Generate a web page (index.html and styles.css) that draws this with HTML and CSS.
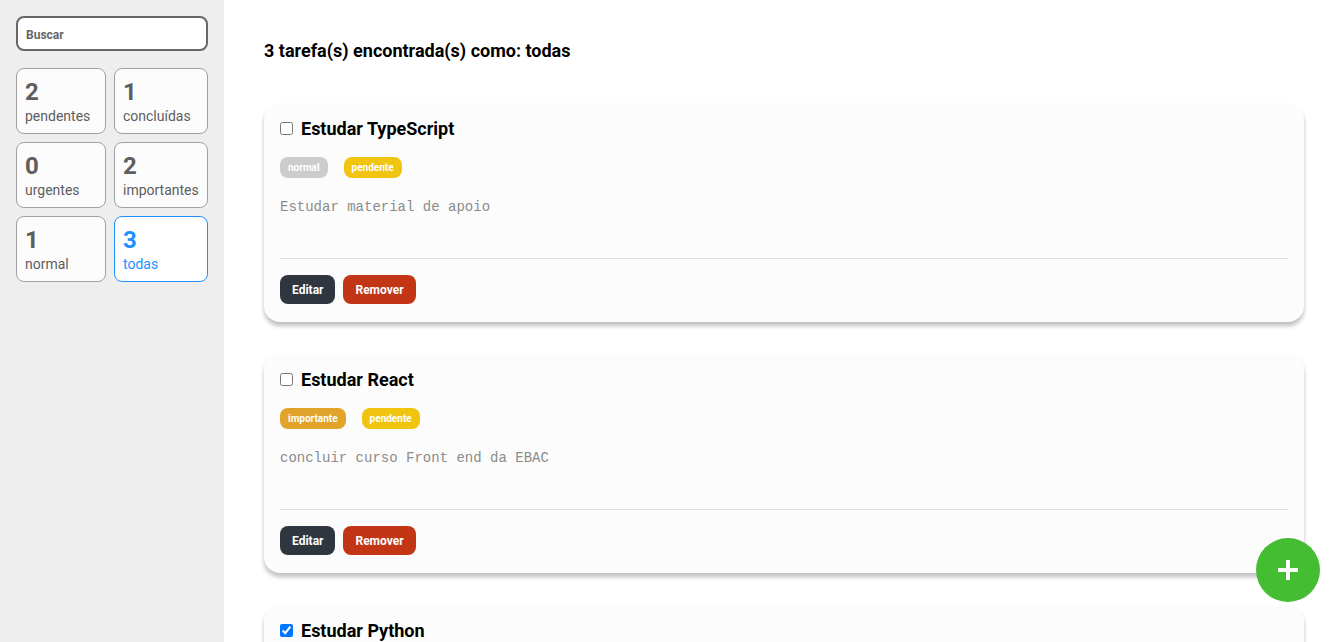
FILE: index.html
```html
<!DOCTYPE html>
<html lang="pt-BR">
<head>
<meta charset="utf-8">
<title>Tarefas</title>
<link rel="stylesheet" href="styles.css">
</head>
<body>
<div class="layout">
  <aside class="sidebar">
    <input class="search" type="text" placeholder="Buscar">
    <div class="filters">
      <div class="filter"><span class="count">2</span><span class="label">pendentes</span></div>
      <div class="filter"><span class="count">1</span><span class="label">concluídas</span></div>
      <div class="filter"><span class="count">0</span><span class="label">urgentes</span></div>
      <div class="filter"><span class="count">2</span><span class="label">importantes</span></div>
      <div class="filter"><span class="count">1</span><span class="label">normal</span></div>
      <div class="filter active"><span class="count">3</span><span class="label">todas</span></div>
    </div>
  </aside>
  <main class="main">
    <h2 class="heading">3 tarefa(s) encontrada(s) como: todas</h2>
    <ul class="list">
      <li class="task">
        <label class="task-title"><input type="checkbox"> <span>Estudar TypeScript</span></label>
        <div class="tags"><span class="tag tag-normal">normal</span><span class="tag tag-pendente">pendente</span></div>
        <div class="desc">Estudar material de apoio</div>
        <div class="actions"><button class="btn btn-edit">Editar</button><button class="btn btn-remove">Remover</button></div>
      </li>
      <li class="task">
        <label class="task-title"><input type="checkbox"> <span>Estudar React</span></label>
        <div class="tags"><span class="tag tag-importante">importante</span><span class="tag tag-pendente">pendente</span></div>
        <div class="desc">concluir curso Front end da EBAC</div>
        <div class="actions"><button class="btn btn-edit">Editar</button><button class="btn btn-remove">Remover</button></div>
      </li>
      <li class="task">
        <label class="task-title"><input type="checkbox" checked> <span>Estudar Python</span></label>
        <div class="tags"><span class="tag tag-normal">normal</span><span class="tag tag-done">concluída</span></div>
        <div class="desc">Estudar Python</div>
        <div class="actions"><button class="btn btn-edit">Editar</button><button class="btn btn-remove">Remover</button></div>
      </li>
    </ul>
    <button class="fab" aria-label="Adicionar">
      <svg width="22" height="22" viewBox="0 0 22 22"><path d="M11 1v20M1 11h20" stroke="#fff" stroke-width="4" fill="none"/></svg>
    </button>
  </main>
</div>
</body>
</html>
```
FILE: styles.css
```css
* { box-sizing: border-box; }
html, body { margin: 0; padding: 0; height: 100%; }
body { font-family: Roboto, "Noto Sans", sans-serif; background: #fff; overflow: hidden; }
.layout { display: grid; grid-template-columns: 224px 1fr; height: 100vh; }
.sidebar { background: #eee; padding: 16px; }
.search {
  width: 100%; height: 35px; border: 2px solid #666; border-radius: 8px;
  padding: 9px 8px 7px; font-family: Roboto, sans-serif; font-weight: 700; font-size: 12px;
  background: #fff; color: #666; display: block;
}
.search::placeholder { color: #666; }
.filters { display: grid; grid-template-columns: 90fr 94fr; gap: 8px; margin-top: 17px; }
.filter {
  height: 66px; border: 1px solid #a1a1a1; border-radius: 8px; background: #fcfcfc;
  padding: 9px 8px 8px; display: flex; flex-direction: column; color: #5e5e5e;
}
.count { font-size: 24px; font-weight: 700; line-height: 28px; }
.label { font-size: 14px; line-height: 16px; margin-top: 2px; }
.filter.active { border-color: #1e90ff; color: #1e90ff; background: #fff; }
.main { padding: 40px 40px 0 40px; overflow: hidden; }
.heading { margin: 0 0 42px; font-size: 18px; font-weight: 700; line-height: 21px; color: #000; }
.list { list-style: none; margin: 0; padding: 0; display: flex; flex-direction: column; gap: 32px; }
.task {
  background: #fcfcfc; border-radius: 16px; padding: 15px 16px 18px;
  box-shadow: 0 4px 4px rgba(0,0,0,0.25);
}
.task-title { display: flex; align-items: center; gap: 6px; font-size: 18px; font-weight: 700; line-height: 21px; color: #000; }
.task-title input { margin: 0 2px 0 0; width: 13px; height: 13px; }
.tags { display: flex; gap: 16px; margin-top: 18px; }
.tag { font-size: 10px; font-weight: 700; color: #fff; padding: 0 8px; height: 21px; line-height: 21px; border-radius: 8px; }
.tag-normal { background: #ccc; }
.tag-pendente { background: #f1c40f; }
.tag-importante { background: #e1a32a; }
.tag-done { background: #44bd32; }
.desc {
  margin-top: 16px; padding-top: 5px; font-family: "Liberation Mono", monospace;
  font-size: 14px; line-height: 16px; color: #8b8b8b; border-bottom: 1px solid #ddd;
  margin-bottom: 16px; height: 65px;
}
.actions { display: flex; gap: 8px; }
.btn {
  border: none; border-radius: 8px; color: #fff; font-family: Roboto, sans-serif;
  font-weight: 700; font-size: 12px; height: 29px; padding: 0 12px; cursor: pointer;
}
.btn-edit { background: #2f3640; }
.btn-remove { background: #c23616; }
.fab {
  position: fixed; right: 24px; bottom: 40px; width: 64px; height: 64px; border-radius: 50%;
  border: none; background: #44bd32; display: flex; align-items: center; justify-content: center;
}
```
